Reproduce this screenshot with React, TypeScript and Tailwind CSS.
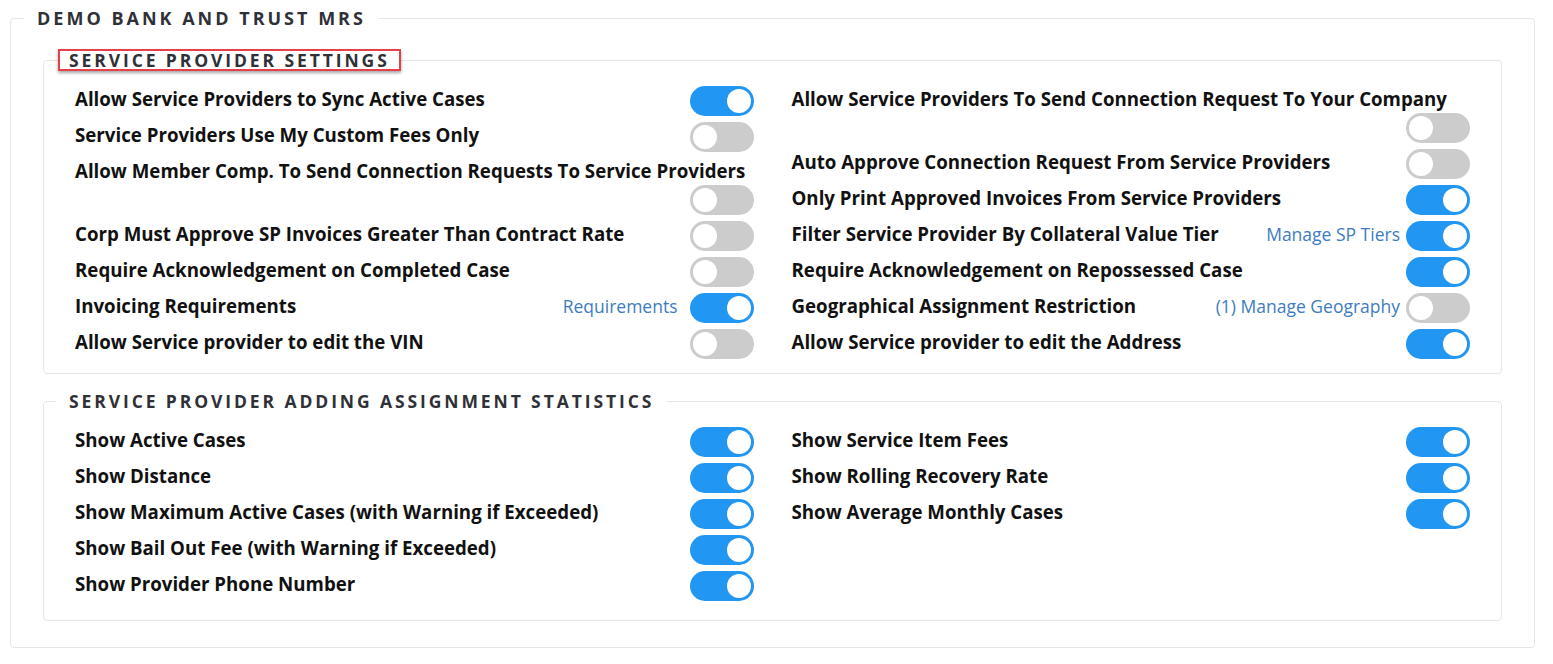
import React from 'react';

interface Setting {
  label: string;
  on: boolean;
  link?: string;
  linkGap?: string;
}

const leftSettings: Setting[] = [
  { label: 'Allow Service Providers to Sync Active Cases', on: true },
  { label: 'Service Providers Use My Custom Fees Only', on: false },
  { label: 'Allow Member Comp. To Send Connection Requests To Service Providers', on: false },
  { label: 'Corp Must Approve SP Invoices Greater Than Contract Rate', on: false },
  { label: 'Require Acknowledgement on Completed Case', on: false },
  { label: 'Invoicing Requirements', on: true, link: 'Requirements', linkGap: 'mr-[12px]' },
  { label: 'Allow Service provider to edit the VIN', on: false },
];

const rightSettings: Setting[] = [
  { label: 'Allow Service Providers To Send Connection Request To Your Company', on: false },
  { label: 'Auto Approve Connection Request From Service Providers', on: false },
  { label: 'Only Print Approved Invoices From Service Providers', on: true },
  { label: 'Filter Service Provider By Collateral Value Tier', on: true, link: 'Manage SP Tiers', linkGap: 'mr-[6px]' },
  { label: 'Require Acknowledgement on Repossessed Case', on: true },
  { label: 'Geographical Assignment Restriction', on: false, link: '(1) Manage Geography', linkGap: 'mr-[6px]' },
  { label: 'Allow Service provider to edit the Address', on: true },
];

const leftStats: Setting[] = [
  { label: 'Show Active Cases', on: true },
  { label: 'Show Distance', on: true },
  { label: 'Show Maximum Active Cases (with Warning if Exceeded)', on: true },
  { label: 'Show Bail Out Fee (with Warning if Exceeded)', on: true },
  { label: 'Show Provider Phone Number', on: true },
];

const rightStats: Setting[] = [
  { label: 'Show Service Item Fees', on: true },
  { label: 'Show Rolling Recovery Rate', on: true },
  { label: 'Show Average Monthly Cases', on: true },
];

const Toggle: React.FC<{ on: boolean }> = ({ on }) => (
  <span
    className={`my-[3px] flex h-[30px] w-[64px] shrink-0 items-center rounded-full px-[3px] ${
      on ? 'justify-end bg-[#2196f3]' : 'justify-start bg-[#cccccc]'
    }`}
  >
    <span className="h-[24px] w-[24px] rounded-full bg-white" />
  </span>
);

const Row: React.FC<{ item: Setting }> = ({ item }) => (
  <div className="flex flex-wrap items-start">
    <span className="pt-[5px] text-[18.7px] leading-[22px] font-bold text-[#111]">{item.label}</span>
    <div className="ml-auto flex items-start">
      {item.link && (
        <span className={`${item.linkGap} pt-[5px] text-[17.5px] leading-[22px] text-[#3d7cc0]`}>{item.link}</span>
      )}
      <Toggle on={item.on} />
    </div>
  </div>
);

const Column: React.FC<{ items: Setting[] }> = ({ items }) => (
  <div className="flex flex-col">
    {items.map((item) => (
      <Row key={item.label} item={item} />
    ))}
  </div>
);

export default function App() {
  return (
    <div
      className="min-h-[664px] bg-white pt-[6px] pr-[18px] pb-[16px] pl-[10px]"
      style={{ fontFamily: '"Open Sans", "Liberation Sans", sans-serif' }}
    >
      <fieldset className="rounded-[4px] border border-[#e6e6e6] px-[32px] pb-[26px]">
        <legend className="ml-[-19px] px-[13px] text-[18px] leading-[24px] font-bold tracking-[3px] text-[#2f3136]">
          DEMO BANK AND TRUST MRS
        </legend>

        <fieldset className="mt-[19px] rounded-[4px] border border-[#e6e6e6] px-[31px] pt-[12px] pb-[11px]">
          <legend className="ml-[-17px] border-2 border-[#e5414a] px-[9px] text-[17.5px] leading-[18px] font-bold tracking-[2.9px] text-[#2f3136] shadow-[0_2px_3px_rgba(0,0,0,0.35)]">
            SERVICE PROVIDER SETTINGS
          </legend>
          <div className="grid grid-cols-2 gap-x-[38px]">
            <Column items={leftSettings} />
            <Column items={rightSettings} />
          </div>
        </fieldset>

        <fieldset className="mt-[16px] rounded-[4px] border border-[#e6e6e6] px-[31px] pt-[12px] pb-[16px]">
          <legend className="ml-[-19px] px-[13px] text-[17.5px] leading-[22px] font-bold tracking-[2.9px] text-[#2f3136]">
            SERVICE PROVIDER ADDING ASSIGNMENT STATISTICS
          </legend>
          <div className="grid grid-cols-2 gap-x-[38px]">
            <Column items={leftStats} />
            <Column items={rightStats} />
          </div>
        </fieldset>
      </fieldset>
    </div>
  );
}
